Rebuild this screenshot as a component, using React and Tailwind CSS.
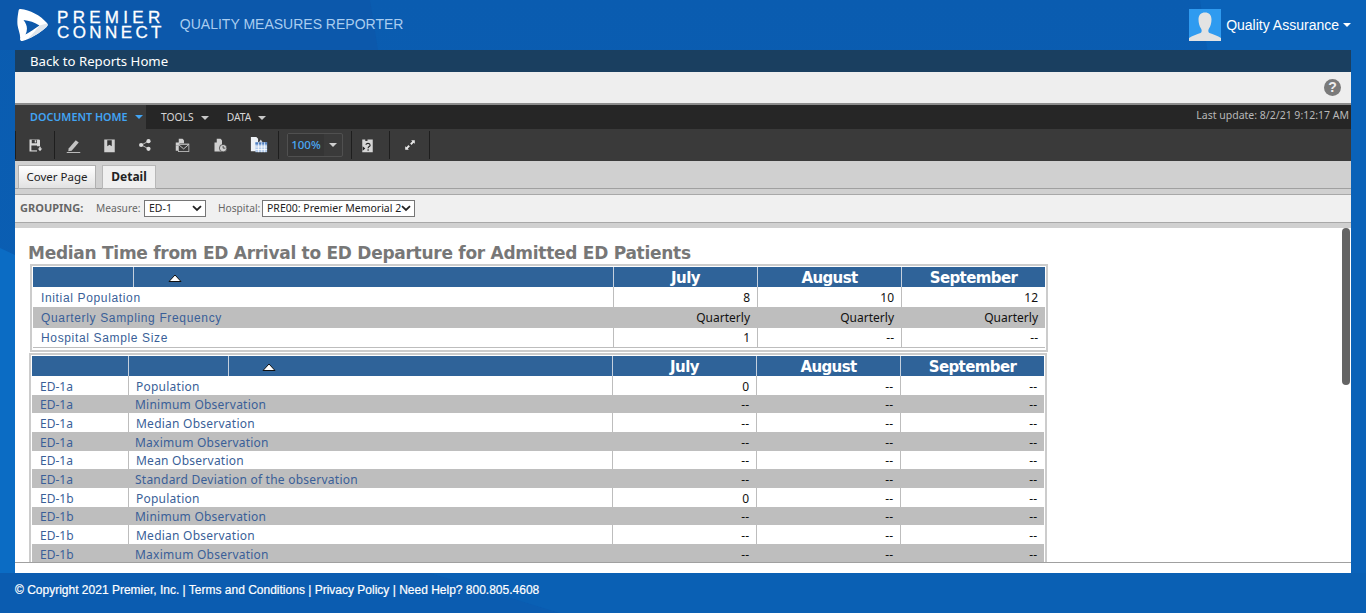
import React from "react";

const ui = "font-['Noto_Sans',sans-serif]";
const arial = "font-['Liberation_Sans',sans-serif]";
const rowBlue = "text-[#3a5f98]";

const months = ["July", "August", "September"];

const summaryRows = [
  ["Initial Population", "8", "10", "12"],
  ["Quarterly Sampling Frequency", "Quarterly", "Quarterly", "Quarterly"],
  ["Hospital Sample Size", "1", "--", "--"],
];

const detailNames = [
  "Population",
  "Minimum Observation",
  "Median Observation",
  "Maximum Observation",
  "Mean Observation",
  "Standard Deviation of the observation",
];

// only the rows that show above the fold
const detailRows = [
  ...detailNames.map((name, i) => ["ED-1a", name, i === 0 ? "0" : "--"]),
  ...detailNames.slice(0, 4).map((name, i) => ["ED-1b", name, i === 0 ? "0" : "--"]),
];

const Caret = ({ className = "border-t-[#c8c8c8]" }) => (
  <span className={`inline-block w-0 h-0 border-x-[4px] border-x-transparent border-t-[4px] ${className}`} />
);

const SortArrow = () => (
  <svg width="14" height="9" viewBox="0 0 14 9">
    <path d="M7 1 L13 7.5 H1 Z" fill="#fff" stroke="#111" strokeWidth="1" />
  </svg>
);

const Logo = () => (
  <svg width="31" height="32" viewBox="0 0 31 32">
    <path
      fillRule="evenodd"
      d="M3.5 0 C13 1 23 6 30 14 C31 15.5 31 16.5 29.5 18 C23 24 14 29.5 5.5 32 C4 32.3 3.2 31.5 3 30 C4 27 1 20 .5 16 C0 11 .8 6 1.6 1.6 C1.9 .4 2.5 0 3.5 0 Z M6.5 11 C12 11.5 18 13.5 22.5 16.5 C18 19.5 13 23 8.5 25.5 C10.8 21 10.5 16 6.5 11 Z"
      fill="#fff"
    />
    <path d="M22.5 16.5 L30 14.5 C31 15.5 31 16.5 29.5 18 C24 23 17 27.5 10 30.5 C15 26 19 21 22.5 16.5 Z" fill="#dfe5ec" />
  </svg>
);

const Avatar = () => (
  <svg width="32" height="32" viewBox="0 0 32 32" className="block">
    <rect width="32" height="32" fill="#2f9bf0" />
    <path d="M0 32 V29 C3 26.5 8 25.5 11.5 24 C13 23.3 13 21 12 19.5 C10.5 17.5 9.5 14 9.5 10.5 C9.5 6 12 3.5 16 3.5 C20 3.5 22.5 6 22.5 10.5 C22.5 14 21.5 17.5 20 19.5 C19 21 19 23.3 20.5 24 C24 25.5 29 26.5 32 29 V32 Z" fill="#e3e3e3" />
  </svg>
);

// toolbar drawings, all on a 20x20 box
const toolIcons = {
  save: (
    <>
      <path d="M2 2 H15 L16 3 V11 H12 V18 H2 Z" fill="#d8d8d8" />
      <rect x="5" y="2.5" width="7" height="4.5" fill="#3a3a3a" />
      <rect x="9" y="3" width="2" height="3" fill="#d8d8d8" />
      <rect x="4.5" y="10" width="7.5" height="6.5" fill="#3a3a3a" />
      <path d="M15 11.5 H17 V14 H19 L16 17.5 L13 14 H15 Z" fill="#d8d8d8" />
    </>
  ),
  edit: (
    <>
      <path d="M3.5 14 L13 3 L17 6 L7.5 17 L3 17.5 Z" fill="#c4c4c4" />
      <rect x="1" y="19" width="18" height="1" fill="#e6e6e6" />
    </>
  ),
  bookmark: (
    <>
      <rect x="3" y="2" width="14" height="17" fill="#d0d0d0" />
      <path d="M7 3 H13 V11 L10 9 L7 11 Z" fill="#333" />
    </>
  ),
  share: (
    <>
      <path d="M15 4.5 L5 10 L15 15.5" stroke="#d0d0d0" strokeWidth="1.2" fill="none" />
      <circle cx="15" cy="4.5" r="3" fill="#dedede" />
      <circle cx="4.5" cy="10" r="3" fill="#dedede" />
      <circle cx="15" cy="15.5" r="3" fill="#dedede" />
    </>
  ),
  mail: (
    <>
      <path d="M5 1 H10 L12 3 V7 H5 Z" fill="#cfcfcf" />
      <rect x="1" y="6" width="5" height="4" fill="#cfcfcf" />
      <rect x="4" y="7.5" width="15" height="11" fill="#cfcfcf" />
      <path d="M5 9 H18 V17.5 H5 Z" fill="#3a3a3a" />
      <path d="M5 9 L11.5 14.5 L18 9" stroke="#cfcfcf" strokeWidth="1.2" fill="none" />
      <rect x="1" y="10" width="3" height="7" fill="#cfcfcf" />
    </>
  ),
  schedule: (
    <>
      <path d="M5 1 H10 L12 3 V10 H5 Z" fill="#cfcfcf" />
      <rect x="2" y="6" width="10" height="12" fill="#cfcfcf" />
      <circle cx="13.5" cy="13.5" r="5" fill="#cfcfcf" stroke="#3a3a3a" />
      <path d="M13.5 10.5 V13.5 H16.5" stroke="#333" strokeWidth="1.1" fill="none" />
    </>
  ),
  table: (
    <>
      <path d="M1 1 H7 L9 3 V17 H1 Z" fill="#eef2f6" />
      <rect x="6" y="7" width="13" height="11" fill="#b4cceb" />
      <path d="M6 7 H19 V9.5 H6 Z" fill="#4f7fc0" />
      <path d="M6 12.2 H19 M6 15 H19 M9.5 7 V18 M13 7 V18 M16.2 7 V18" stroke="#fff" strokeWidth=".8" />
      <path d="M12 4 L14 7 H10 Z" fill="#cfd8e3" />
    </>
  ),
  help: (
    <>
      <path d="M3 2 H7 V4 H10 V2 H17 V19 H3 Z" fill="#d6d6d6" />
      <path d="M8 9 C8 6.5 13.5 6.5 13.5 9.5 C13.5 11.5 10.8 11 10.8 13.5 M10.8 15 V17" stroke="#222" strokeWidth="1.5" fill="none" />
      <path d="M3.5 11 L7 14 L3.5 17 Z" fill="#222" />
    </>
  ),
  expand: (
    <>
      <path d="M12 2 H18 V8 L16 6.3 L12.5 9.8 L10.2 7.5 L13.7 4 Z" fill="#e8e8e8" />
      <path d="M2 18 V12 L4 13.7 L7.5 10.2 L9.8 12.5 L6.3 16 L8 18 Z" fill="#e8e8e8" />
    </>
  ),
};

const ToolIcon = ({ name, w, size = 15 }) => (
  <div className={`flex justify-center items-center shrink-0 ${w}`}>
    <svg width={size} height={size} viewBox="0 0 20 20">{toolIcons[name]}</svg>
  </div>
);

const Sep = ({ className = "" }) => <div className={`w-px h-[28px] shrink-0 bg-[#1e1e1e] ${className}`} />;

const Toolbar = () => (
  <div className="h-[32px] shrink-0 bg-[#3a3a3a] flex items-center">
    <Sep />
    <ToolIcon name="save" w="w-[38px]" />
    <Sep />
    <ToolIcon name="edit" w="w-[18px] ml-[9px]" />
    <ToolIcon name="bookmark" w="w-[20px] ml-[17px]" />
    <ToolIcon name="share" w="w-[20px] ml-[16px]" size={14} />
    <ToolIcon name="mail" w="w-[20px] ml-[17px]" />
    <ToolIcon name="schedule" w="w-[20px] ml-[18px]" />
    <ToolIcon name="table" w="w-[20px] ml-[19px]" size={18} />
    <Sep className="ml-[9px]" />
    <div className="ml-[8px] w-[56px] h-[24px] shrink-0 rounded-[2px] border border-[#505050] flex items-center">
      <span className={`${ui} w-[36px] h-full bg-[#353535] flex items-center justify-center text-[11.5px] text-[#4aa8f4] font-medium`}>100%</span>
      <span className="flex-1 flex justify-center">
        <Caret className="border-t-[#cfcfcf]" />
      </span>
    </div>
    <Sep className="ml-[8px]" />
    <ToolIcon name="help" w="w-[30px] mr-[7px]" />
    <Sep />
    <ToolIcon name="expand" w="w-[39px]" size={12} />
    <Sep />
  </div>
);

const NavBar = () => (
  <div className={`${ui} h-[24px] shrink-0 bg-[#262626] flex items-center text-[10.8px] font-semibold`}>
    <div className="w-[131px] h-full bg-[#3a3a3a] flex items-center gap-[7px] pl-[15px] text-[#41a4f4]">
      DOCUMENT HOME
      <Caret className="border-t-[#41a4f4]" />
    </div>
    <div className="flex items-center gap-[7px] ml-[15px] pt-[2px] text-[10.3px] text-[#d6d6d6] font-normal">
      TOOLS
      <Caret />
    </div>
    <div className="flex items-center gap-[7px] ml-[18px] pt-[2px] text-[10.3px] text-[#d6d6d6] font-normal">
      DATA
      <Caret />
    </div>
    <div className="ml-auto mr-[2px] mb-[3px] text-[10.5px] text-[#b8b8b8] font-normal">Last update: 8/2/21 9:12:17 AM</div>
  </div>
);

const Tabs = () => (
  <div className={`${ui} h-[28px] shrink-0 bg-[#d0d0d0] flex items-end pl-[3px] gap-[6px] border-b border-[#a0a0a0] text-[11.5px]`}>
    <div className="w-[78px] h-[24px] mb-[-1px] bg-gradient-to-b from-[#ffffff] to-[#e2e2e2] border border-[#b0b0b0] flex items-center justify-center text-[#222]">
      Cover Page
    </div>
    <div className="w-[54px] h-[24px] mb-[-1px] bg-[#f0f0f0] border border-[#b8b8b8] flex items-center justify-center font-bold text-[12px] text-[#222]">
      Detail
    </div>
  </div>
);

const FakeSelect = ({ value, width }) => (
  <div className={`${width} h-[17px] bg-white border border-[#767676] flex items-center pl-[4px] pr-[3px] justify-between text-[10.5px] text-[#222] whitespace-nowrap`}>
    {value}
    <svg width="10" height="7" viewBox="0 0 10 7" className="shrink-0">
      <path d="M1 1.2 L5 5 L9 1.2" stroke="#222" strokeWidth="1.8" fill="none" />
    </svg>
  </div>
);

const Grouping = () => (
  <div className="bg-[#d0d0d0] pt-[5px] pb-[5px] shrink-0">
    <div className={`${ui} h-[29px] bg-[#f0f0f0] border-y border-[#a8a8a8] flex items-center pl-[5px] text-[10.2px] text-[#666]`}>
      <span className="font-bold text-[11px] w-[76px]">GROUPING:</span>
      <span className="w-[48px]">Measure:</span>
      <FakeSelect value="ED-1" width="w-[62px]" />
      <span className="ml-[12px] w-[44px]">Hospital:</span>
      <FakeSelect value="PRE00: Premier Memorial 2" width="w-[153px]" />
    </div>
  </div>
);

const Num = ({ children, w, gray, pad }) => (
  <div className={`${w} ${pad} shrink-0 h-full flex items-center justify-end pr-[7px] text-[12px] text-[#111] ${gray ? "" : "border-l border-[#bdbdbd]"}`}>
    {children}
  </div>
);

const HeadMonth = ({ children, w }) => (
  <div className={`${w} shrink-0 h-full pt-[2px] border-l border-[#c4d0de] flex items-center justify-center font-['DejaVu_Sans',sans-serif] font-bold text-[15px] tracking-[-0.6px] text-white`}>
    {children}
  </div>
);

const SummaryTable = () => (
  <div className={`${ui} ml-[15px] w-[1018px] h-[88px] border-2 border-[#cccccc] p-px`}>
    <div className="h-[20px] bg-[#2f6399] flex items-center">
      <div className="w-[100px] h-full" />
      <div className="w-[480px] h-full pt-[2px] border-l border-[#c4d0de] flex items-center pl-[34px]">
        <SortArrow />
      </div>
      {months.map((m) => (
        <HeadMonth key={m} w="w-[144px]">{m}</HeadMonth>
      ))}
    </div>
    {summaryRows.map((row, i) => (
      <div key={row[0]} className={`h-[20.33px] flex items-center ${i === 1 ? "bg-[#bebebe]" : "bg-white"} ${i === 2 ? "border-b border-[#bdbdbd]" : ""}`}>
        <div className={`${arial} w-[580px] shrink-0 pl-[8px] pt-[2px] text-[12px] tracking-[0.65px] ${rowBlue}`}>{row[0]}</div>
        <Num w="w-[144px]" pad="pt-[2px]" gray={i === 1}>{row[1]}</Num>
        <Num w="w-[144px]" pad="pt-[2px]" gray={i === 1}>{row[2]}</Num>
        <Num w="w-[144px]" pad="pt-[2px]" gray={i === 1}>{row[3]}</Num>
      </div>
    ))}
  </div>
);

const DetailTable = () => (
  <div className={`${ui} ml-[14px] mt-[1px] w-[1018px] border-2 border-b-0 border-[#cccccc] p-px pb-0`}>
    <div className="h-[20px] bg-[#2f6399] flex items-center">
      <div className="w-[96px] h-full" />
      <div className="w-[100px] h-full border-l border-[#c4d0de]" />
      <div className="w-[384px] h-full pt-[2px] border-l border-[#c4d0de] flex items-center pl-[33px]">
        <SortArrow />
      </div>
      {months.map((m) => (
        <HeadMonth key={m} w="w-[144px]">{m}</HeadMonth>
      ))}
    </div>
    {detailRows.map((row, i) => {
      const gray = i % 2 === 1;
      return (
        <div key={i} className={`h-[18.67px] flex items-center ${gray ? "bg-[#bebebe]" : "bg-white"}`}>
          <div className={`w-[96px] shrink-0 pl-[8px] pt-[3px] text-[12px] ${rowBlue}`}>{row[0]}</div>
          <div className={`w-[484px] shrink-0 h-full pt-[3px] flex items-center pl-[7px] text-[12px] tracking-[0.24px] ${rowBlue} ${gray ? "" : "border-l border-[#bdbdbd]"}`}>
            {row[1]}
          </div>
          <Num w="w-[144px]" pad="pt-[3px]" gray={gray}>{row[2]}</Num>
          <Num w="w-[144px]" pad="pt-[3px]" gray={gray}>--</Num>
          <Num w="w-[144px]" pad="pt-[3px]" gray={gray}>--</Num>
        </div>
      );
    })}
  </div>
);

const App = () => (
  <div className="relative h-[613px] w-[1366px] overflow-hidden bg-gradient-to-b from-[#0a5cb0] to-[#0b60b5]">
    {/* faint facets of the page background */}
    <svg className="absolute inset-0" width="1366" height="613" viewBox="0 0 1366 613">
      <path d="M0 0 H370 L378 50 H0 Z" fill="#0c58ab" />
      <path d="M1200 0 H1366 V613 H1290 Z" fill="#0a62b8" />
      <path d="M0 248 L15 255 V573 H0 Z" fill="#0b6cc4" />
      <path d="M0 573 H430 L560 613 H0 Z" fill="#0b5cb0" />
      <path d="M430 573 H1366 V613 H560 Z" fill="#0a60b4" />
    </svg>

    <div className="relative flex flex-col h-full">
      <header className="h-[50px] flex items-center shrink-0">
        <div className="ml-[17px]">
          <Logo />
        </div>
        <div className={`${arial} ml-[9px] text-white mt-[-1px]`}>
          <div className="text-[17px] leading-[15px] tracking-[4.3px] [-webkit-text-stroke:0.3px_white]">PREMIER</div>
          <div className="text-[17px] leading-[15px] tracking-[3.4px] [-webkit-text-stroke:0.3px_white]">CONNECT</div>
        </div>
        <div className={`${arial} ml-[15px] mb-[2px] text-[14px] text-[#a9cdf0]`}>QUALITY MEASURES REPORTER</div>
        <div className="ml-auto flex items-center mr-[15px]">
          <Avatar />
          <span className={`${arial} ml-[5px] mr-[4px] text-[14px] text-white`}>Quality Assurance</span>
          <Caret className="border-t-white" />
        </div>
      </header>

      <main className="mx-[15px] w-[1336px] h-[523px] shrink-0 flex flex-col bg-white overflow-hidden">
        <div className={`${ui} h-[22px] shrink-0 bg-[#1a3f60] flex items-center pl-[15px] pt-px text-[13.2px] text-white`}>
          Back to Reports Home
        </div>
        <div className="h-[31px] shrink-0 bg-[#eeeeee] flex items-center justify-end pr-[10px]">
          <div className="w-[17px] h-[17px] rounded-full bg-[#7a7a7a] flex items-center justify-center font-['Liberation_Sans',sans-serif] font-bold text-[14px] text-[#eee]">?</div>
        </div>
        <div className="h-[2px] shrink-0 bg-[#8c8c8c]" />
        <NavBar />
        <Toolbar />
        <Tabs />
        <Grouping />

        <div className="relative flex-1 min-h-0 overflow-hidden">
          <div className="h-[335px] overflow-hidden border-b border-[#a0a0a0]">
            <h1 className="font-['DejaVu_Sans',sans-serif] font-bold text-[17px] tracking-[-0.275px] leading-[20px] text-[#777777] ml-[13px] pt-[15px] mb-[1px] box-content whitespace-nowrap">
              Median Time from ED Arrival to ED Departure for Admitted ED Patients
            </h1>
            <SummaryTable />
            <DetailTable />
          </div>
          <div className="absolute right-[1px] top-0 w-[8px] h-[157px] rounded-[4px] bg-[#646464]" />
        </div>
      </main>

      <footer className={`${arial} flex-1 flex items-center pl-[15px] pb-[6px] text-[12px] text-white [-webkit-text-stroke:0.2px_white]`}>
        © Copyright 2021 Premier, Inc. | Terms and Conditions | Privacy Policy | Need Help? 800.805.4608
      </footer>
    </div>
  </div>
);

export default App;
